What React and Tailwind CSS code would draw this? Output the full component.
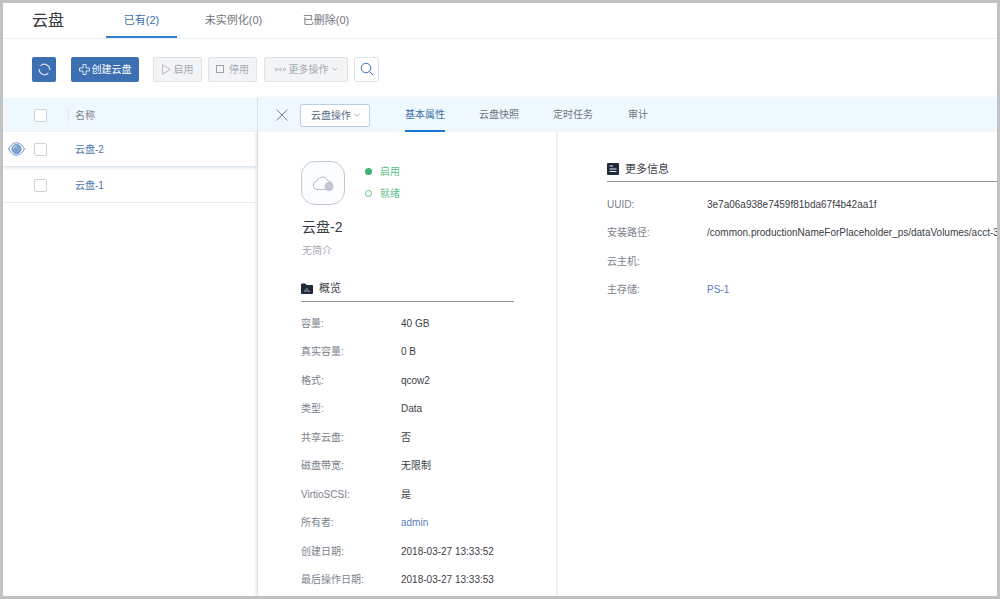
function Tab({ label, active, className }) {
  return (
    <div className={`flex h-full items-center justify-center border-b-2 pt-[2px] text-[11px] ${active ? "border-[#2f80c8] text-[#3a6ea5]" : "border-transparent text-[#6f757e]"} ${className}`}>
      {label}
    </div>
  );
}

function SubTab({ label, active, className }) {
  return (
    <div className={`flex h-full items-center border-b-2 pt-[1px] text-[10px] ${active ? "border-[#1677d8] text-[#3a6ea5]" : "border-transparent text-[#6f757e]"} ${className}`}>
      {label}
    </div>
  );
}

function Chevron({ color = "#8a94a3" }) {
  return (
    <svg width="6" height="4" viewBox="0 0 6 4" fill="none" stroke={color} strokeWidth="0.8"><path d="M0.5 0.7 3 3.2 5.5 0.7" /></svg>
  );
}

function DisabledBtn({ children, className }) {
  return (
    <div className={`flex h-[25px] items-center justify-center rounded-[2px] border border-[#dfe3e8] bg-[#f2f4f6] text-[10px] text-[#a3aab3] ${className}`}>
      {children}
    </div>
  );
}

function Checkbox() {
  return <div className="h-[13px] w-[13px] rounded-[2px] border border-[#cfd3d9] bg-white" />;
}

function Row({ label, value, link }) {
  return (
    <div className="flex h-[28.5px] items-center text-[10px]">
      <div className="w-[100px] shrink-0 text-[#7b828b]">{label}</div>
      <div className={`whitespace-nowrap ${link ? "text-[#5b7db5]" : "text-[#3a4048]"}`}>{value}</div>
    </div>
  );
}

function SectionTitle({ icon, label, className }) {
  return (
    <div className={`flex h-[26px] items-center gap-[6px] border-b border-[#8e949b] text-[11px] text-[#3d434b] ${className}`}>
      {icon}
      <span>{label}</span>
    </div>
  );
}

const overview = [
  ["容量:", "40 GB"],
  ["真实容量:", "0 B"],
  ["格式:", "qcow2"],
  ["类型:", "Data"],
  ["共享云盘:", "否"],
  ["磁盘带宽:", "无限制"],
  ["VirtioSCSI:", "是"],
  ["所有者:", "admin", true],
  ["创建日期:", "2018-03-27 13:33:52"],
  ["最后操作日期:", "2018-03-27 13:33:53"],
];

const more = [
  ["UUID:", "3e7a06a938e7459f81bda67f4b42aa1f"],
  ["安装路径:", "/common.productionNameForPlaceholder_ps/dataVolumes/acct-36c27e8ff05c4780bf6d2fa65700f22e/vol-3e7a06a9"],
  ["云主机:", ""],
  ["主存储:", "PS-1", true],
];

export default function App() {
  return (
    <div className="flex h-[599px] w-[1000px] flex-col overflow-hidden border-[3px] border-[#c2c2c2] bg-white font-['Liberation_Sans','Noto_Sans_CJK_SC',sans-serif]">
      {/* Top tabs */}
      <div className="flex h-[36px] shrink-0 items-stretch border-b border-[#eaf1f7] pl-[29px]">
        <div className="flex w-[74px] items-center text-[16px] text-[#333a42]">云盘</div>
        <Tab label="已有(2)" active className="w-[71px]" />
        <Tab label="未实例化(0)" className="ml-[27px] w-[59px]" />
        <Tab label="已删除(0)" className="ml-[39px] w-[48px]" />
      </div>

      {/* Toolbar */}
      <div className="flex h-[59px] shrink-0 items-center pl-[29px] pt-[1px]">
        <div className="flex h-[25px] w-[24px] items-center justify-center rounded-[2px] bg-[#3d70b2]">
          <svg width="13" height="13" viewBox="0 0 13 13" fill="none" stroke="#dbe6f4" strokeWidth="1.1">
            <path d="M2.600 2.800A5.400 5.400 0 0 1 11.800 7" />
            <path d="M10.400 10.200A5.400 5.400 0 0 1 1.200 6" />
          </svg>
        </div>
        <div className="ml-[15px] flex h-[25px] w-[68px] items-center justify-center gap-[2px] rounded-[2px] bg-[#3d70b2] text-[10px] text-white">
          <svg width="11" height="11" viewBox="0 0 11 11" fill="none" stroke="#e4edf8" strokeWidth="0.9">
            <path d="M4 0.5h3v3.500h3.500v3H7v3.500H4V7H0.500V4H4z" />
          </svg>
          <span>创建云盘</span>
        </div>
        <DisabledBtn className="ml-[14px] w-[49px] gap-[3px]">
          <svg width="9" height="11" viewBox="0 0 9 11" fill="none" stroke="#a3aab3" strokeWidth="0.8"><path d="M0.600 0.800 8.200 5.500 0.600 10.200z" /></svg>
          <span>启用</span>
        </DisabledBtn>
        <DisabledBtn className="ml-[6px] w-[49px] gap-[5px]">
          <div className="h-[8px] w-[8px] border border-[#9aa1aa]" />
          <span>停用</span>
        </DisabledBtn>
        <DisabledBtn className="ml-[7px] w-[84px] gap-[3px]">
          <span className="flex gap-[1px]">
            <span className="h-[3px] w-[3px] rounded-full border-[0.8px] border-[#a3aab3]" />
            <span className="h-[3px] w-[3px] rounded-full border-[0.8px] border-[#a3aab3]" />
            <span className="h-[3px] w-[3px] rounded-full border-[0.8px] border-[#a3aab3]" />
          </span>
          <span>更多操作</span>
          <Chevron color="#a3aab3" />
        </DisabledBtn>
        <div className="ml-[6px] flex h-[25px] w-[25px] items-center justify-center rounded-[2px] border border-[#dfe5ec] bg-white">
          <svg width="14" height="14" viewBox="0 0 14 14" fill="none" stroke="#3d70b2" strokeWidth="1">
            <circle cx="6" cy="6" r="4.800" />
            <path d="M9.500 9.500 13 13" />
          </svg>
        </div>
      </div>

      {/* Body */}
      <div className="flex min-h-0 flex-1">
        {/* List */}
        <div className="z-10 w-[254px] shrink-0">
          <div className="flex h-[34px] items-center bg-[#eff8fe] pl-[31px]">
            <Checkbox />
            <div className="ml-[21px] h-[14px] border-l border-[#e3e9ef]" />
            <span className="ml-[6px] text-[10px] text-[#7b828b]">名称</span>
          </div>
          <div className="relative flex h-[35px] items-center border-b border-[#dfe7ef] pl-[31px] shadow-[0_1px_3px_rgba(100,130,170,0.2)]">
            <svg className="absolute left-[5px] top-[10px]" width="17" height="14" viewBox="0 0 17 14">
              <path d="M0.600 7C3 2.600 5.700 0.800 8.500 0.800S14 2.600 16.400 7C14 11.400 11.300 13.200 8.500 13.200S3 11.400 0.600 7Z" fill="none" stroke="#5b87c0" strokeWidth="1" />
              <circle cx="8.500" cy="7" r="4.500" fill="#7ea4d2" stroke="#4f7db8" strokeWidth="0.800" />
              <path d="M8.500 3.800A3.200 3.200 0 0 0 5.300 7" fill="none" stroke="#dbe7f5" strokeWidth="0.900" />
            </svg>
            <Checkbox />
            <span className="ml-[28px] text-[10px] text-[#4f77ad]">云盘-2</span>
          </div>
          <div className="flex h-[36px] items-center border-b border-[#e6ebf0] pl-[31px] pt-[1px]">
            <Checkbox />
            <span className="ml-[28px] text-[10px] text-[#4f77ad]">云盘-1</span>
          </div>
        </div>

        {/* Detail */}
        <div className="flex min-w-0 flex-1 flex-col border-l border-[#dbe4ee] shadow-[-1px_0_3px_rgba(100,130,170,0.2)]">
          <div className="flex h-[34px] shrink-0 items-center bg-[#eff8fe] pl-[18px]">
            <svg width="12" height="12" viewBox="0 0 12 12" fill="none" stroke="#7d838b" strokeWidth="1"><path d="M0.500 0.500 11.500 11.500M11.500 0.500 0.500 11.500" /></svg>
            <div className="ml-[12px] flex h-[23px] w-[70px] items-center justify-center gap-[3px] rounded-[2px] border border-[#b9cfe8] bg-white pl-[1px] text-[10px] text-[#5a6c85]">
              <span>云盘操作</span>
              <Chevron />
            </div>
            <SubTab label="基本属性" active className="ml-[35px]" />
            <SubTab label="云盘快照" className="ml-[34px]" />
            <SubTab label="定时任务" className="ml-[34px]" />
            <SubTab label="审计" className="ml-[35px]" />
          </div>

          <div className="flex min-h-0 flex-1">
            {/* Left column */}
            <div className="w-[300px] shrink-0 border-r-2 border-[#eef1f4] pl-[43px] pt-[29px]">
              <div className="flex items-start">
                <div className="flex h-[44px] w-[44px] items-center justify-center rounded-[14px] border border-[#c3c9d3] bg-[#fbfcfe]">
                  <svg width="22" height="16" viewBox="0 0 22 16">
                    <path d="M6 14.500H5A4.200 4.200 0 0 1 4.600 6.200 6 6 0 0 1 15.800 5.600 4.600 4.600 0 0 1 20 9.500" fill="none" stroke="#aab1bd" strokeWidth="0.800" />
                    <path d="M5 14.500H14" fill="none" stroke="#aab1bd" strokeWidth="0.800" />
                    <circle cx="17" cy="11.500" r="4" fill="#c3c9d3" stroke="#a6adb9" strokeWidth="0.600" />
                  </svg>
                </div>
                <div className="-mt-[1px] ml-[20px] flex flex-col">
                  <div className="flex h-[22px] items-center text-[10px] text-[#5fbf8a]">
                    <span className="mr-[8px] h-[7px] w-[7px] rounded-full bg-[#3cb371]" />
                    启用
                  </div>
                  <div className="flex h-[22px] items-center text-[10px] text-[#5fbf8a]">
                    <span className="mr-[8px] h-[7px] w-[7px] rounded-full border border-[#5fbf8a]" />
                    就绪
                  </div>
                </div>
              </div>
              <div className="mt-[12px] pl-[1px] text-[14px] leading-[20px] text-[#333a42]">云盘-2</div>
              <div className="mt-[7px] pl-[1px] text-[10px] leading-[14px] text-[#a3a9b1]">无简介</div>
              <SectionTitle
                className="mt-[18px] w-[213px] pb-[1px]"
                label="概览"
                icon={
                  <svg width="12" height="11" viewBox="0 0 12 11">
                    <path d="M0 1.500A1 1 0 0 1 1 0.500H4.500L5.500 2H11A1 1 0 0 1 12 3V10A1 1 0 0 1 11 11H1A1 1 0 0 1 0 10Z" fill="#1f2a3a" />
                    <path d="M4 6.500V9M6 5V9M8 7V9" stroke="#c6ccd4" strokeWidth="0.800" />
                  </svg>
                }
              />
              <div className="mt-[7px]">
                {overview.map(([l, v, link]) => (
                  <Row key={l} label={l} value={v} link={link} />
                ))}
              </div>
            </div>

            {/* Right column */}
            <div className="min-w-0 flex-1 overflow-hidden pl-[49px] pt-[24px]">
              <SectionTitle
                className="pt-[1px]"
                label="更多信息"
                icon={
                  <svg width="12" height="12" viewBox="0 0 12 12">
                    <rect width="12" height="12" rx="1" fill="#1f2a3a" />
                    <path d="M2.500 3H6M2.500 6H9.500M2.500 8.500H9.500" stroke="#e8ebef" strokeWidth="1" />
                  </svg>
                }
              />
              <div className="mt-[8px]">
                {more.map(([l, v, link]) => (
                  <Row key={l} label={l} value={v} link={link} />
                ))}
              </div>
            </div>
          </div>
        </div>
      </div>
    </div>
  );
}
